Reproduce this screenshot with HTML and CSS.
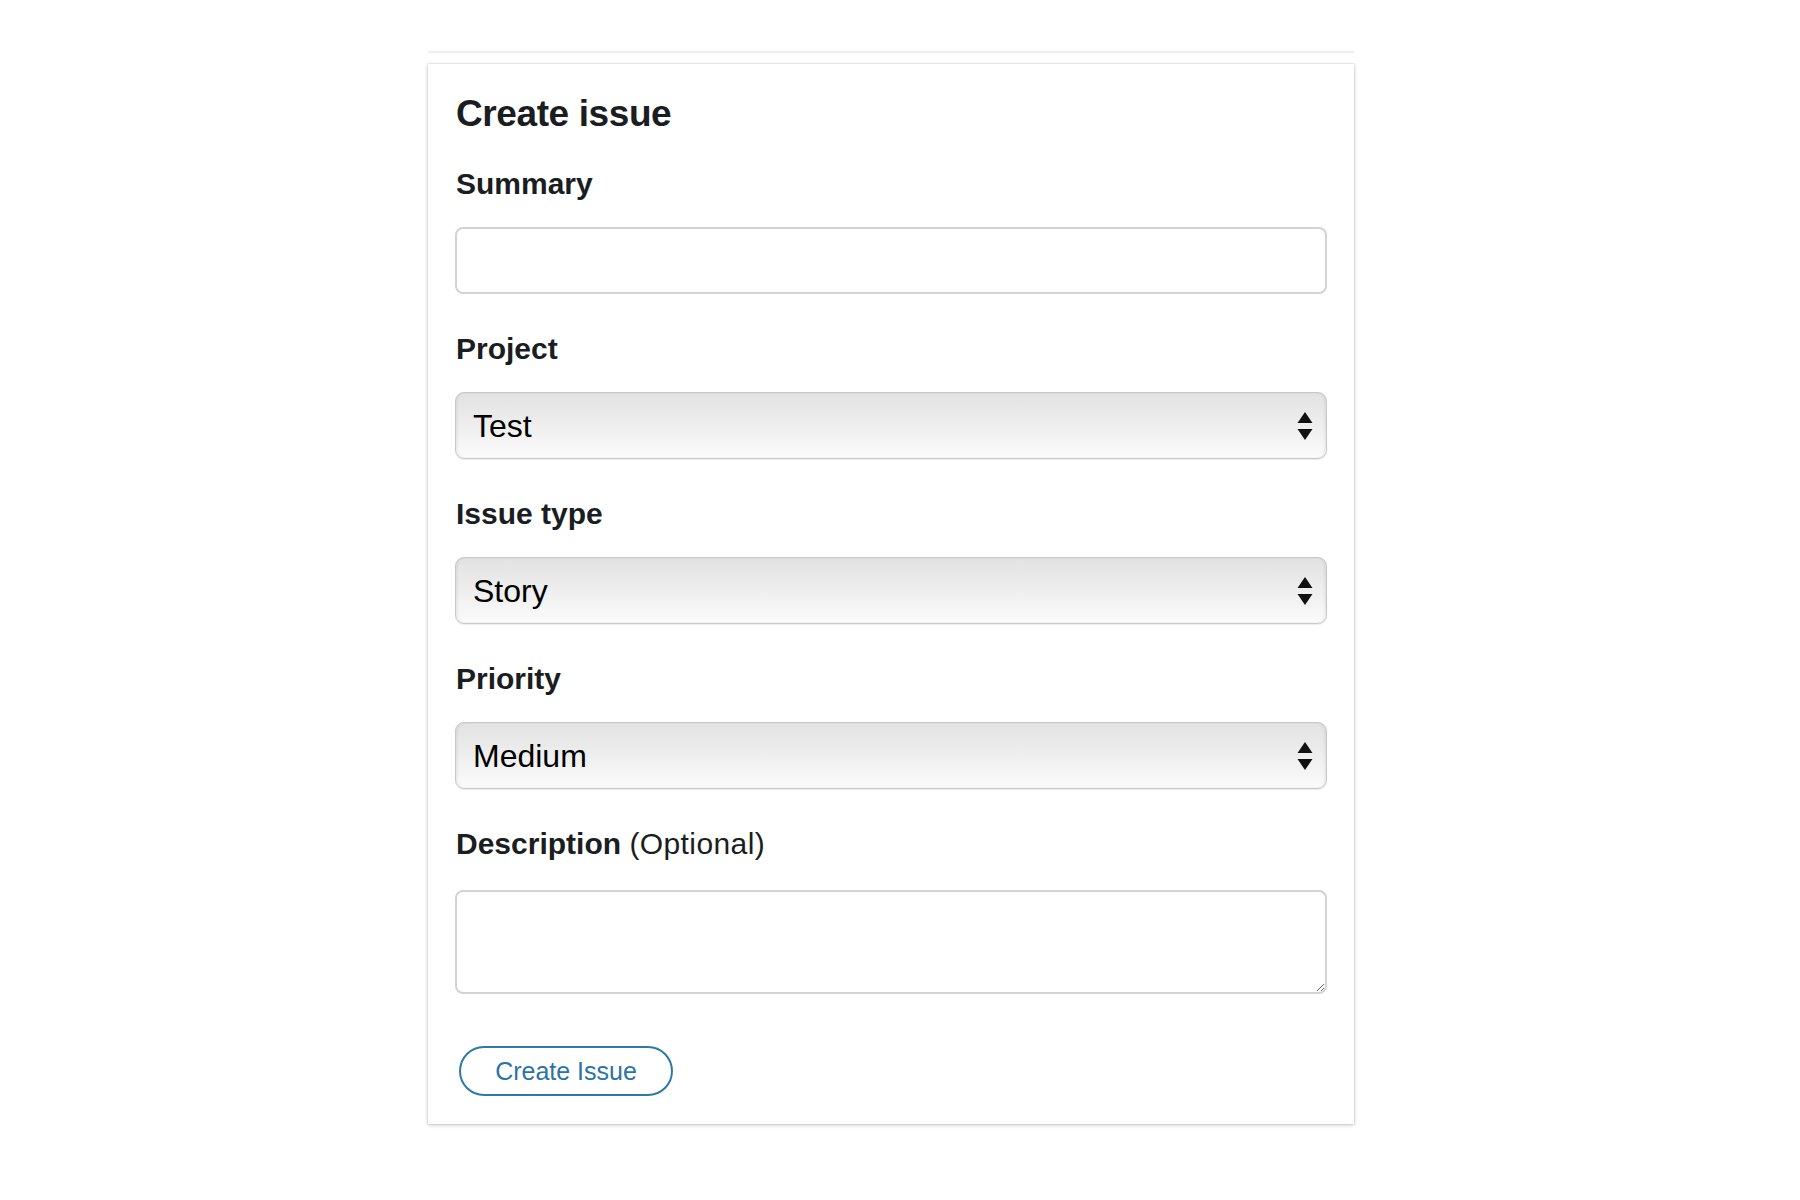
FILE: index.html
```html
<!doctype html>
<html>
<head>
	<title>Create issue</title>
	<link rel="stylesheet" href="styles.css">
</head>
<body>
	<div class="page">
		<div class="topline"></div>
		<form class="card" method="GET" action="">
			<h1 class="title">Create issue</h1>

			<div class="field">
				<label for="summary" class="label">Summary</label>
				<input type="text" id="summary" class="input" />
			</div>

			<div class="field">
				<label for="project" class="label">Project</label>
				<div class="select-wrap">
					<select id="project" class="select">
						<option>Test</option>
					</select>
					<svg class="arrows" width="16" height="30" viewBox="0 0 16 30">
						<polygon points="8,1 15.5,12 0.5,12" fill="#111"/>
						<polygon points="0.5,18 15.5,18 8,29" fill="#111"/>
					</svg>
				</div>
			</div>

			<div class="field">
				<label for="type" class="label">Issue type</label>
				<div class="select-wrap">
					<select id="type" class="select">
						<option>Story</option>
					</select>
					<svg class="arrows" width="16" height="30" viewBox="0 0 16 30">
						<polygon points="8,1 15.5,12 0.5,12" fill="#111"/>
						<polygon points="0.5,18 15.5,18 8,29" fill="#111"/>
					</svg>
				</div>
			</div>

			<div class="field">
				<label for="priority" class="label">Priority</label>
				<div class="select-wrap">
					<select id="priority" class="select">
						<option>Medium</option>
					</select>
					<svg class="arrows" width="16" height="30" viewBox="0 0 16 30">
						<polygon points="8,1 15.5,12 0.5,12" fill="#111"/>
						<polygon points="0.5,18 15.5,18 8,29" fill="#111"/>
					</svg>
				</div>
			</div>

			<div class="field last">
				<label for="description" class="label">Description <span class="optional">(Optional)</span></label>
				<textarea id="description" class="textarea"></textarea>
			</div>

			<button type="button" class="btn">Create Issue</button>
		</form>
	</div>
</body>
</html>
```
FILE: styles.css
```css
*{
	margin:0;
	padding:0;
	box-sizing:border-box;
}
body{
	background:#fff;
	font-family:"Liberation Sans", Arial, sans-serif;
	color:#1a1d21;
}
.page{
	width:926px;
	margin-left:428px;
	padding-top:51px;
	padding-bottom:40px;
}
.topline{
	height:2px;
	background:#f0f0f0;
	box-shadow:0 0 2px rgba(0,0,0,.05);
	margin-bottom:11px;
}
.card{
	display:flex;
	flex-direction:column;
	align-items:stretch;
	padding:28px 27px 28px 27px;
	background:#fff;
	box-shadow:0 1px 4px rgba(0,0,0,.22), 0 0 0 1px rgba(0,0,0,.05);
}
.title{
	font-size:37px;
	line-height:44px;
	font-weight:bold;
	letter-spacing:-0.4px;
	margin:0 0 30px 1px;
}
.field{
	display:flex;
	flex-direction:column;
	margin-bottom:37px;
}
.field.last{
	margin-bottom:52px;
}
.label{
	font-size:30px;
	line-height:36px;
	font-weight:bold;
	margin:0 0 25px 1px;
}
.field.last .label{
	margin-bottom:28px;
}
.optional{
	font-weight:normal;
	letter-spacing:0.4px;
}
.input{
	height:67px;
	border:2px solid #d3d3d3;
	border-radius:8px;
	outline:none;
	font-size:30px;
	padding:0 18px;
	font-family:inherit;
}
.select-wrap{
	position:relative;
}
.select{
	-webkit-appearance:none;
	appearance:none;
	width:100%;
	height:67px;
	border:1px solid #c8c8c8;
	border-radius:9px;
	background:linear-gradient(#e2e2e2, #eeeeee 50%, #fbfbfb);
	box-shadow:inset 2px 0 2px rgba(0,0,0,.05), inset -2px 0 2px rgba(0,0,0,.05), 0 1px 1px rgba(0,0,0,.08);
	font-family:inherit;
	font-size:32px;
	color:#000;
	padding:0 50px 0 17px;
	outline:none;
}
.arrows{
	position:absolute;
	right:14px;
	top:19px;
	pointer-events:none;
}
.textarea{
	height:104px;
	border:2px solid #d3d3d3;
	border-radius:8px;
	outline:none;
	font-family:inherit;
	font-size:30px;
	padding:10px 18px;
}
.btn{
	align-self:flex-start;
	width:214px;
	height:50px;
	margin-left:4px;
	border:2px solid #2e78aa;
	border-radius:25px;
	background:#fff;
	color:#2a74a6;
	font-family:"Liberation Sans", Arial, sans-serif;
	font-size:25px;
	cursor:pointer;
}
```
